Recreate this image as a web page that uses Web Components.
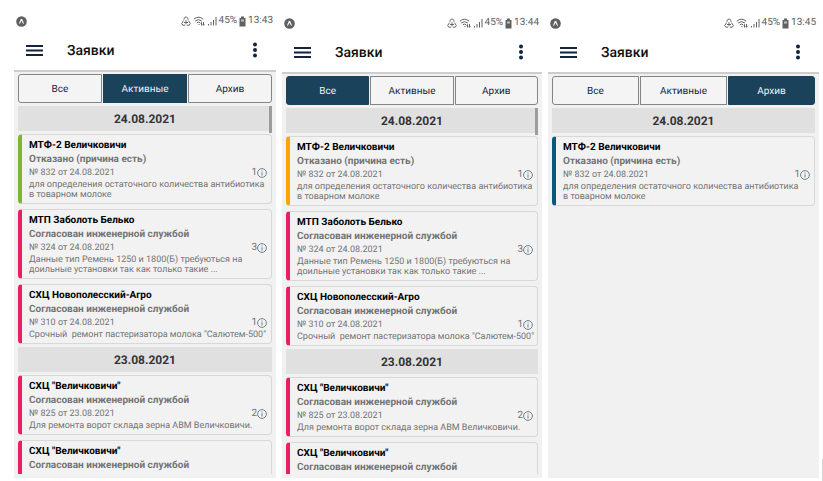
<!DOCTYPE html>
<html lang="ru">
<head>
<meta charset="utf-8">
<title>Заявки</title>
<style>
html, body { height: 100%; }
body { margin: 0; background: #fff; font-family: Roboto, "Liberation Sans", sans-serif; text-rendering: geometricPrecision; position: relative; overflow: hidden; }
</style>
</head>
<body>
<screen-gallery>
  <request-screen time="13:43" active="0" style="--top:14px"></request-screen>
  <request-screen time="13:44" active="1" style="--top:16px"></request-screen>
  <request-screen time="13:45" active="2" style="--top:16px"></request-screen>
</screen-gallery>

<script>
const define = (name, html, setup) => {
  const tpl = document.createElement('template');
  tpl.innerHTML = html;
  customElements.define(name, class extends HTMLElement {
    connectedCallback() {
      if (this.shadowRoot) return;
      const root = this.attachShadow({ mode: 'open' });
      root.append(tpl.content.cloneNode(true));
      if (setup) setup(this, root);
    }
  });
};

define('screen-gallery', `
<style>
:host { display: grid; grid-template-columns: 262fr 260fr 271fr; gap: 6px; height: 100vh; box-sizing: border-box; padding: 0 4px 3px 14px; }
.edge { position: absolute; right: 0; bottom: 0; width: 1px; height: 22px; background: #d6d6d6; }
</style>
<slot></slot><div class="edge"></div>`);

define('status-bar', `
<style>
:host { display: flex; align-items: center; height: 14px; padding: 0 3px 0 2px; gap: 2px; font-size: 10px; line-height: 14px; color: #606060; }
svg { display: block; flex: none; }
.space { flex: 1; }
span { white-space: nowrap; }
</style>
<svg width="11" height="11" viewBox="0 0 11 11"><circle cx="5.5" cy="5.5" r="5.3" fill="#606060"/><path d="M2.900 7.700 4.500 3.600Q5.500 2 6.500 3.600L8.100 7.700 6.900 7.500 5.500 4.800 4.100 7.500z" fill="#f4f4f4"/></svg>
<div class="space"></div>
<svg width="10" height="10" viewBox="0 0 10 10" fill="none" stroke="#666" stroke-width="1"><path d="M3 3.800V2.400L5 .8 7 2.400V3.800M2.600 4.600.7 7.500 1.800 9.200H4.200M7.400 4.600 9.300 7.500 8.200 9.200H5.800M3 6.500H7M5 4.200V8.200"/></svg>
<svg width="13" height="11" viewBox="0 0 13 11" fill="none" stroke="#606060" stroke-width="1"><path d="M.8 3.200Q5.500-.8 10.200 3.200M2.200 5Q5.500 2.200 8.800 5M3.800 6.800Q5.500 5.300 7.200 6.800"/><path d="M5.500 8.500h1M8.500 9.500V6.500M7.700 7.300 8.500 6.500M10.500 6v3.200M9.700 8.400 10.500 9.300 11.300 8.400"/></svg>
<svg width="9" height="10" viewBox="0 0 9 10" stroke="#606060" stroke-width="1"><path d="M.5 8v1.500M3 6v3.500M5.500 4v5.500M8 1v8.500"/></svg>
<span>45%</span>
<svg width="7" height="11" viewBox="0 0 7 11"><path d="M2 .5h3V2h1.500v8.500h-6V2H2z" fill="#606060"/><path d="M2 3.400h3v2.200H2z" fill="#bbb"/></svg>
<span id="time"></span>`,
(el, root) => { root.getElementById('time').textContent = el.getAttribute('time'); });

define('app-toolbar', `
<style>
:host { display: flex; align-items: center; height: 42px; padding: 2px 10px 0 12px; box-sizing: border-box; }
button { border: 0; padding: 0; background: none; display: block; }
svg { display: block; }
h1 { flex: 1; margin: 0; padding: 2px 0 0 24px; font-size: 14px; font-weight: 500; line-height: 18px; color: #111; }
</style>
<button aria-label="Меню"><svg width="17" height="13" viewBox="0 0 17 13" stroke="#15233c" stroke-width="2"><path d="M0 2h17M0 6.500h17M0 11h17"/></svg></button>
<h1><slot></slot></h1>
<button aria-label="Ещё"><svg width="20" height="16" viewBox="0 0 20 16" fill="#10253c"><circle cx="9" cy="2.600" r="2"/><circle cx="9" cy="8" r="2"/><circle cx="9" cy="13.400" r="2"/></svg></button>`);

define('filter-tabs', `
<style>
:host { display: grid; grid-template-columns: repeat(3, 1fr); gap: 1px; height: 29px; }
button { font: 10px/14px Roboto, "Liberation Sans", sans-serif; text-rendering: inherit; color: #17243c; background: #f4f4f4; border: 1px solid #858585; padding: 2px 0 0; }
button:first-of-type { border-radius: 3px 0 0 3px; }
button:last-of-type { border-radius: 0 3px 3px 0; }
button[aria-pressed=true] { background: #1a425b; border-color: #1a425b; color: #eef3f6; }
</style>
<button>Все</button><button>Активные</button><button>Архив</button>`,
(el, root) => {
  root.querySelectorAll('button').forEach((b, i) =>
    b.setAttribute('aria-pressed', String(i === Number(el.getAttribute('selected')))));
});

define('date-heading', `
<style>
:host { display: block; flex: none; background: #e0e0e0; height: 25px; text-align: center; font-size: 12px; line-height: 26px; font-weight: 700; color: #333; margin: 3px 0; }
</style>
<slot></slot>`);

define('request-card', `
<style>
:host { display: block; flex: none; box-sizing: border-box; border: 1px solid #d8d8d8; border-left: 4px solid var(--accent); border-radius: 4px; padding: 4px 4px 3px 7px; background: #f2f2f2; color: #747474; }
:host(:not(:last-child)) { margin-bottom: 5px; }
h2, p { margin: 0; white-space: pre; }
h2 { font-size: 10px; line-height: 14px; font-weight: 700; color: #000; }
.state { font-size: 10px; line-height: 14px; font-weight: 700; }
.meta { display: flex; align-items: center; height: 12px; font-size: 9px; line-height: 12px; }
.count { display: flex; align-items: center; margin-left: auto; font-size: 10px; line-height: 12px; }
.text { font-size: 9px; line-height: 10px; margin-top: 1px; }
svg { display: block; }
</style>
<h2><slot name="name"></slot></h2>
<p class="state"><slot name="state"></slot></p>
<div class="meta"><slot name="number"></slot><span class="count"><slot name="count"></slot><svg width="10" height="10" viewBox="0 0 10 10" fill="none" stroke="#71808e"><circle cx="5" cy="5" r="4.400"/><path d="M5 4.300v3.200M5 2.500v1"/></svg></span></div>
<p class="text"><slot name="text"></slot></p>`);

const agreed = 'Согласован инженерной службой';
const items = [
  { date: '24.08.2021' },
  { name: 'МТФ-2 Величковичи', state: 'Отказано (причина есть)', number: '№ 832 от 24.08.2021', count: '1', text: 'для определения остаточного количества антибиотика\nв товарном молоке' },
  { name: 'МТП Заболоть Белько', state: agreed, number: '№ 324 от 24.08.2021', count: '3', text: 'Данные тип Ремень 1250 и 1800(Б) требуються на\nдоильные установки так как только такие ...' },
  { name: 'СХЦ Новополесский-Агро', state: agreed, number: '№ 310 от 24.08.2021', count: '1', text: 'Срочный  ремонт пастеризатора молока "Салютем-500"' },
  { date: '23.08.2021' },
  { name: 'СХЦ "Величковичи"', state: agreed, number: '№ 825 от 23.08.2021', count: '2', text: 'Для ремонта ворот склада зерна АВМ Величковичи.' },
  { name: 'СХЦ "Величковичи"', state: agreed }
];
const screens = [
  { tab: 1, accent: '#7fb530', count: 7 },
  { tab: 0, accent: '#faa500', count: 7 },
  { tab: 2, accent: '#075a7c', count: 2 }
];

define('request-screen', `
<style>
:host { display: flex; flex-direction: column; min-width: 0; min-height: 0; padding-top: var(--top); }
main { flex: 1; min-height: 0; display: flex; flex-direction: column; box-sizing: border-box; background: #f1f1f1; border-top: 2px solid #cdcdcd; padding: 2px 4px 4px; }
filter-tabs { flex: none; }
.list { position: relative; flex: 1; min-height: 0; overflow: hidden; display: flex; flex-direction: column; }
.thumb { position: absolute; right: 0; top: 3px; width: 3px; height: 27px; background: #9c9c9c; }
</style>
<status-bar></status-bar>
<app-toolbar>Заявки</app-toolbar>
<main><div class="list"></div></main>`,
(el, root) => {
  const cfg = screens[Number(el.getAttribute('active'))];
  root.querySelector('status-bar').shadowRoot.getElementById('time').textContent = el.getAttribute('time');
  const tabs = document.createElement('filter-tabs');
  tabs.setAttribute('selected', cfg.tab);
  root.querySelector('main').prepend(tabs);
  const list = root.querySelector('.list');
  items.slice(0, cfg.count).forEach((item, i) => {
    if (item.date) {
      const d = document.createElement('date-heading');
      d.textContent = item.date;
      list.append(d);
      return;
    }
    const card = document.createElement('request-card');
    card.style.setProperty('--accent', i === 1 ? cfg.accent : '#e91e63');
    for (const [slot, value] of Object.entries(item)) {
      const s = document.createElement('span');
      s.slot = slot;
      s.textContent = value;
      card.append(s);
    }
    if (items[i + 1] && items[i + 1].date) card.style.marginBottom = '0';
    list.append(card);
  });
  if (cfg.count > 2) {
    const thumb = document.createElement('div');
    thumb.className = 'thumb';
    list.append(thumb);
  }
});
</script>
</body>
</html>
